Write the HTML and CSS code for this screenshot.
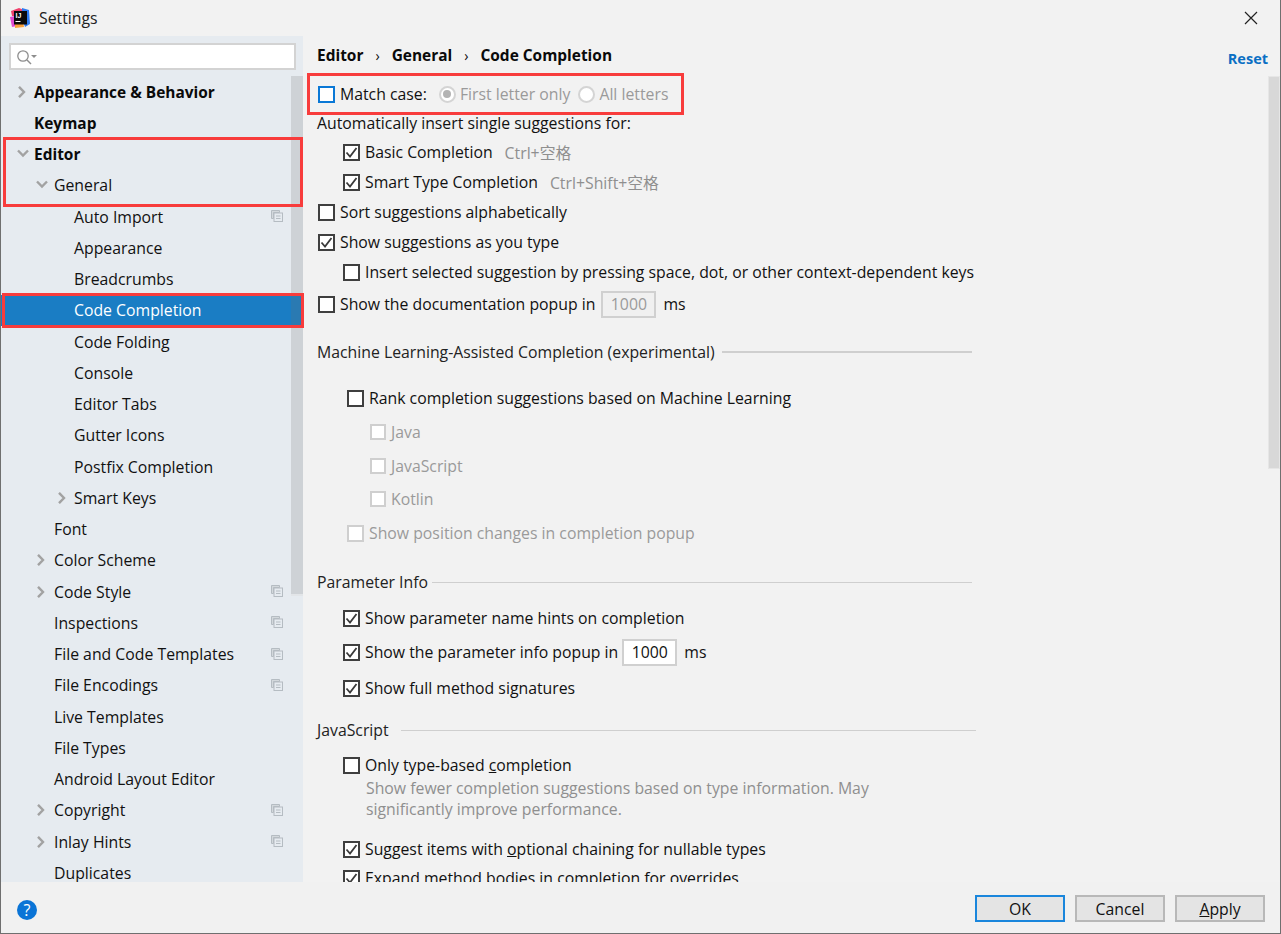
FILE: index.html
```html
<!DOCTYPE html>
<html lang="en">
<head>
<meta charset="utf-8">
<title>Settings</title>
<link rel="stylesheet" href="styles.css">
</head>
<body>
<svg class="defs" width="0" height="0">
  <symbol id="tick" viewBox="0 0 17 17"><path d="M3.5 8.5 L7 12.5 L13.5 4" fill="none" stroke="#3a3a3a" stroke-width="1.8"/></symbol>
  <symbol id="right" viewBox="0 0 12 12"><path d="M2 .8 L7 6 L2 11.200" fill="none" stroke="#a2a2a2" stroke-width="2.400"/></symbol>
  <symbol id="down" viewBox="0 0 12 12"><path d="M1 2.500 L6 7.500 L11 2.500" fill="none" stroke="#a2a2a2" stroke-width="2.400"/></symbol>
  <symbol id="copy" viewBox="0 0 12 12"><path d="M.5.5h8v2h-6v6h-2z" fill="#d3d8dc" stroke="#b5bcc2"/><rect x="3" y="3" width="8.500" height="8.500" fill="#e6ebf0" stroke="#b5bcc2"/><path d="M5 6h4.500M5 8.500h4.500" stroke="#b5bcc2"/></symbol>
</svg>
<div class="window">
  <header class="titlebar">
    <svg class="logo" width="20" height="20" viewBox="0 0 20 20">
      <path d="M1 3 L9 0 L14 2 L8 8 L2 8 Z" fill="#f0406c"/>
      <path d="M12 0 L19 2 L20 16 L15 19 L12 10 Z" fill="#2f7cf0"/>
      <path d="M0 9 L5 8 L7 18 L2 19 Z" fill="#e04bd0"/>
      <path d="M5 14 L13 14 L14 19 L5 20 Z" fill="#f9a13a"/>
      <rect x="4" y="3" width="13" height="13.500" fill="#0a0a0a"/>
      <text x="5.500" y="10" class="logo-text">IJ</text>
      <rect x="5.500" y="13" width="5" height="1" fill="#fff"/>
    </svg>
    <span class="title">Settings</span>
    <svg class="close" width="14" height="14" viewBox="0 0 14 14"><path d="M1 1 L13 13 M13 1 L1 13" stroke="#222" stroke-width="1.200" fill="none"/></svg>
  </header>
  <div class="main">
    <aside class="sidebar">
      <div class="search">
        <svg width="22" height="16" viewBox="0 0 22 16"><circle cx="7" cy="7" r="5.200" fill="none" stroke="#8d8d8d" stroke-width="1.300"/><path d="M11 11 L15 15" stroke="#8d8d8d" stroke-width="1.500"/><path d="M15 6h6l-3 3z" fill="#8d8d8d"/></svg>
      </div>
      <div class="tree-wrap">
        <nav class="tree">
          <div class="node l0 strong"><svg class="arrow"><use href="#right"/></svg>Appearance &amp; Behavior</div>
          <div class="node l0 strong"><span class="arrow"></span>Keymap</div>
          <div class="node l0 strong"><svg class="arrow"><use href="#down"/></svg>Editor</div>
          <div class="node l1"><svg class="arrow"><use href="#down"/></svg>General</div>
          <div class="node l2">Auto Import<svg class="copy"><use href="#copy"/></svg></div>
          <div class="node l2">Appearance</div>
          <div class="node l2">Breadcrumbs</div>
          <div class="node l2 selected">Code Completion</div>
          <div class="node l2">Code Folding</div>
          <div class="node l2">Console</div>
          <div class="node l2">Editor Tabs</div>
          <div class="node l2">Gutter Icons</div>
          <div class="node l2">Postfix Completion</div>
          <div class="node l1b"><svg class="arrow"><use href="#right"/></svg>Smart Keys</div>
          <div class="node l1"><span class="arrow"></span>Font</div>
          <div class="node l1"><svg class="arrow"><use href="#right"/></svg>Color Scheme</div>
          <div class="node l1"><svg class="arrow"><use href="#right"/></svg>Code Style<svg class="copy"><use href="#copy"/></svg></div>
          <div class="node l1"><span class="arrow"></span>Inspections<svg class="copy"><use href="#copy"/></svg></div>
          <div class="node l1"><span class="arrow"></span>File and Code Templates<svg class="copy"><use href="#copy"/></svg></div>
          <div class="node l1"><span class="arrow"></span>File Encodings<svg class="copy"><use href="#copy"/></svg></div>
          <div class="node l1"><span class="arrow"></span>Live Templates</div>
          <div class="node l1"><span class="arrow"></span>File Types</div>
          <div class="node l1"><span class="arrow"></span>Android Layout Editor</div>
          <div class="node l1"><svg class="arrow"><use href="#right"/></svg>Copyright<svg class="copy"><use href="#copy"/></svg></div>
          <div class="node l1"><svg class="arrow"><use href="#right"/></svg>Inlay Hints<svg class="copy"><use href="#copy"/></svg></div>
          <div class="node l1"><span class="arrow"></span>Duplicates</div>
        </nav>
        <div class="tree-scroll"><div class="tree-thumb"></div></div>
      </div>
    </aside>
    <section class="panel">
      <div class="panel-head">
        <div class="crumbs"><span>Editor</span><i>›</i><span>General</span><i>›</i><span>Code Completion</span></div>
        <a class="reset">Reset</a>
      </div>
      <div class="panel-scroll"><div class="panel-thumb"></div></div>
      <div class="form">
        <div class="row r-match"><span class="cb focus"></span><label>Match case:</label>
          <span class="radio on"></span><label class="dim">First letter only</label>
          <span class="radio"></span><label class="dim">All letters</label></div>
        <div class="row r-auto"><label>Automatically insert single suggestions for:</label></div>
        <div class="row r-30 in"><span class="cb"><svg><use href="#tick"/></svg></span><label>Basic Completion</label><span class="key">Ctrl+空格</span></div>
        <div class="row r-30 in"><span class="cb"><svg><use href="#tick"/></svg></span><label>Smart Type Completion</label><span class="key">Ctrl+Shift+空格</span></div>
        <div class="row r-30"><span class="cb"></span><label>Sort suggestions alphabetically</label></div>
        <div class="row r-30"><span class="cb"><svg><use href="#tick"/></svg></span><label>Show suggestions as you type</label></div>
        <div class="row r-30 in"><span class="cb"></span><label>Insert selected suggestion by pressing space, dot, or other context-dependent keys</label></div>
        <div class="row r-30 r-doc"><span class="cb"></span><label>Show the documentation popup in</label><span class="num off">1000</span><label>ms</label></div>

        <div class="group g-ml"><span>Machine Learning-Assisted Completion (experimental)</span><hr class="w-ml"></div>
        <div class="row r-rank ml"><span class="cb"></span><label>Rank completion suggestions based on Machine Learning</label></div>
        <div class="row r-34 r-java ml2"><span class="cb small off"></span><label class="dim">Java</label></div>
        <div class="row r-33 ml2"><span class="cb small off"></span><label class="dim">JavaScript</label></div>
        <div class="row r-34 ml2"><span class="cb small off"></span><label class="dim">Kotlin</label></div>
        <div class="row r-34 ml"><span class="cb off"></span><label class="dim">Show position changes in completion popup</label></div>

        <div class="group g-param"><span>Parameter Info</span><hr></div>
        <div class="row r-param in"><span class="cb"><svg><use href="#tick"/></svg></span><label>Show parameter name hints on completion</label></div>
        <div class="row r-34 r-popup in"><span class="cb"><svg><use href="#tick"/></svg></span><label>Show the parameter info popup in</label><span class="num">1000</span><label>ms</label></div>
        <div class="row r-36 r-full in"><span class="cb"><svg><use href="#tick"/></svg></span><label>Show full method signatures</label></div>

        <div class="group g-js"><span>JavaScript</span><hr class="w-js"></div>
        <div class="row r-only in"><span class="cb"></span><label>Only type-based <u>c</u>ompletion</label></div>
        <p class="hint">Show fewer completion suggestions based on type information. May<br>significantly improve performance.</p>
        <div class="row r-sugg in"><span class="cb"><svg><use href="#tick"/></svg></span><label>Suggest items with <u>o</u>ptional chaining for nullable types</label></div>
        <div class="row r-30 r-exp in"><span class="cb"><svg><use href="#tick"/></svg></span><label>Expand method bodies in completion for overrides</label></div>
      </div>
    </section>
  </div>
  <footer class="footer">
    <span class="help">?</span>
    <div class="buttons">
      <button class="btn default">OK</button>
      <button class="btn">Cancel</button>
      <button class="btn"><u>A</u>pply</button>
    </div>
  </footer>
  <div class="mark m-case"></div>
  <div class="mark m-editor"></div>
  <div class="mark m-code"></div>
</div>
</body>
</html>
```
FILE: styles.css
```css
* { box-sizing: border-box; }
html, body { margin: 0; height: 100%; overflow: hidden; }
body { font-family: "Open Sans", "Noto Sans CJK SC", sans-serif; font-size: 15.800px; color: #111; background: #f2f2f2; }
.defs { position: absolute; }
.window { position: relative; width: 1281px; height: 934px; display: flex; flex-direction: column; background: #f2f2f2; border-left: 1px solid #6f6f6f; border-right: 1px solid #6f6f6f; border-bottom: 1px solid #6f6f6f; }

.titlebar { height: 36px; flex: none; display: flex; align-items: center; padding-left: 9px; padding-right: 22px; }
.logo { margin-right: 9px; }
.logo-text { font: bold 7px "Liberation Sans", sans-serif; fill: #fff; }
.title { color: #222; }
.close { margin-left: auto; }

.main { flex: 1; display: flex; min-height: 0; }

.sidebar { width: 302px; flex: none; background: #e6ebf0; display: flex; flex-direction: column; overflow: hidden; }
.search { margin: 7px 7px 0 8px; height: 27px; background: #fff; border: 2px solid #d3d3d3; display: flex; align-items: center; padding-left: 5px; flex: none; }
.tree-wrap { flex: 1; display: flex; min-height: 0; margin-top: 6px; }
.tree { flex: 1; min-width: 0; margin-right: -12px; overflow: hidden; }
.tree-scroll { width: 12px; flex: none; position: relative; }
.tree-thumb { height: 520px; background: rgba(110, 110, 110, .2); border-bottom: 2px solid #e2e5e8; }
.node { height: 31.250px; display: flex; align-items: center; white-space: nowrap; position: relative; color: #111; }
.arrow { width: 12px; height: 12px; flex: none; margin-right: 5px; }
.l0 { padding-left: 16px; }
.l1 { padding-left: 36px; }
.l1 .arrow { margin-right: 6px; margin-left: -1px; }
.l1b { padding-left: 56px; }
.l1b .arrow { margin-right: 5px; }
.l2 { padding-left: 73px; }
.strong { font-weight: 700; font-size: 15.450px; color: #0a0a0a; }
.selected { background: #1a7dc4; color: #fff; }
.copy { position: absolute; left: 270px; top: 9px; width: 12px; height: 12px; }

.panel { flex: 1; position: relative; min-width: 0; display: flex; flex-direction: column; overflow: hidden; }
.panel-head { height: 41px; flex: none; display: flex; align-items: flex-start; padding: 8px 12px 0 14px; }
.crumbs { display: flex; font-weight: 700; font-size: 15.450px; color: #0a0a0a; align-items: center; }
.crumbs i { font-style: normal; font-weight: 400; margin: 0 12px; font-size: 14px; }
.reset { margin-left: auto; margin-top: 5px; color: #0a6fc4; font-weight: 700; font-size: 14.500px; }
.panel-scroll { position: absolute; right: 0; top: 40px; bottom: 0; width: 12px; }
.panel-thumb { height: 393px; background: #d8d8d8; border: 1px solid #e6e6e6; }
.form { padding-left: 15px; flex: 1; min-height: 0; overflow: hidden; }

.row { display: flex; align-items: center; white-space: nowrap; }
.in { padding-left: 25px; }
.ml { padding-left: 29px; }
.ml2 { padding-left: 52px; }
.r-match { height: 34px; }
.r-auto { height: 24px; margin: 0 0 2px -1px; }
.r-30 { height: 30px; }
.r-33 { height: 33px; }
.r-34 { height: 34px; }
.r-36 { height: 36px; }
.r-doc { margin-top: 2px; }
.r-rank { height: 30px; margin-top: 19px; }
.r-java { margin-top: 2px; }
.r-param { height: 30px; margin-top: 9px; }
.r-popup { margin-top: 2px; }
.r-popup .num { margin-left: 4px; margin-right: 7px; }
.r-full { margin-top: 1px; }
.r-only { height: 30px; margin-top: 8px; }
.r-sugg { height: 30px; margin-top: 14px; }
.r-exp { margin-top: -1px; }

.cb { width: 17px; height: 17px; flex: none; margin-right: 5px; background: #fff; border: 2px solid #3f3f3f; position: relative; }
.cb svg { position: absolute; left: -2px; top: -2px; width: 17px; height: 17px; }
.cb.focus { border-color: #0a78d6; }
.cb.off { border-color: #cfcfcf; }
.cb.small { width: 16px; height: 16px; margin-right: 5px; }
.radio { width: 17px; height: 17px; flex: none; margin: 0 4px 0 12px; border-radius: 50%; background: #fff; border: 2px solid #d4d4d4; position: relative; }
.radio + label + .radio { margin-left: 8px; margin-right: 4px; }
.radio.on::after { content: ""; position: absolute; left: 2.500px; top: 2.500px; width: 8px; height: 8px; border-radius: 50%; background: #b3b3b3; }
label { color: #111; }
.dim { color: #9a9a9a; }
.key { color: #8f8f8f; margin-left: 12px; }
.num { width: 55px; height: 27px; margin: 0 7px 0 6px; background: #fff; border: 2px solid #d0d0d0; text-align: center; line-height: 23px; color: #111; }
.num.off { background: #f0f0f0; color: #9a9a9a; }

.group { display: flex; align-items: center; white-space: nowrap; color: #222; height: 24px; width: 655px; margin-left: -1px; }
.group span { margin-right: 7px; }
.group hr { flex: 1; margin: 0; height: 0; border: 0; border-top: 1px solid #cfcfcf; }
.group hr.w-ml { border-top: 2px solid #cfcfcf; }
.group.g-js { width: 659px; }
.g-js span { margin-right: 12px; }
.g-param span { margin-right: 4px; }
.g-ml { margin-top: 21px; }
.g-param { margin-top: 20px; }
.g-js { margin-top: 12px; }
.hint { margin: -2px 0 0 25px; padding-left: 23px; color: #8f8f8f; line-height: 21px; }

.footer { height: 51px; flex: none; display: flex; align-items: flex-start; padding: 13px 15px 0 16px; background: #f1f1f1; }
.help { width: 20px; height: 20px; margin-top: 5px; border-radius: 50%; background: #0a74d6; color: #fff; text-align: center; font-size: 16px; line-height: 20px; }
.buttons { margin-left: auto; display: flex; gap: 10px; }
.btn { width: 90px; height: 27px; padding: 0; background: #e4e4e4; border: 2px solid #b8b8b8; font: inherit; color: #111; }
.btn.default { border-color: #1a86dc; }

.mark { position: absolute; border: 3px solid #f83c3c; pointer-events: none; }
.m-case { left: 306px; top: 73px; width: 377px; height: 42px; }
.m-editor { left: 2px; top: 137px; width: 300px; height: 70px; }
.m-code { left: 1px; top: 293px; width: 302px; height: 35px; }
```
